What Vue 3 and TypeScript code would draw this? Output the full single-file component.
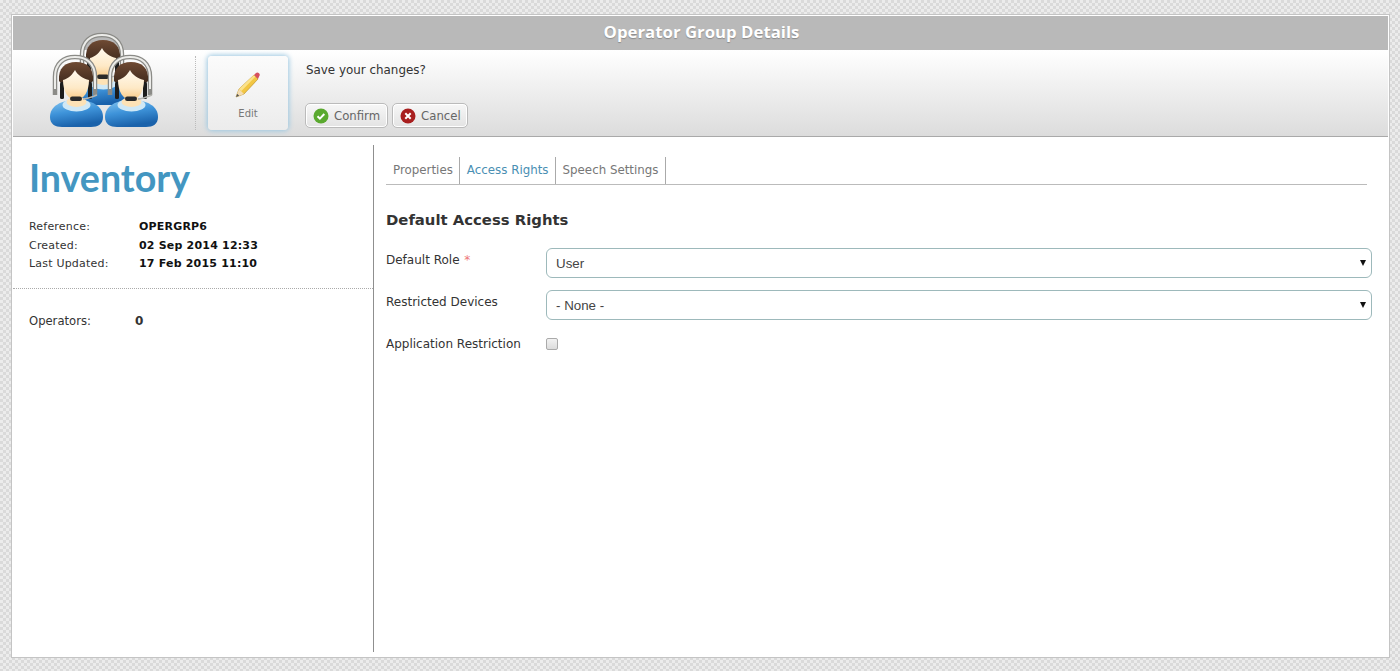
<script setup lang="ts">
const tabs = [
  { label: 'Properties', active: false },
  { label: 'Access Rights', active: true },
  { label: 'Speech Settings', active: false },
]
const info = [
  { label: 'Reference:', value: 'OPERGRP6' },
  { label: 'Created:', value: '02 Sep 2014 12:33' },
  { label: 'Last Updated:', value: '17 Feb 2015 11:10' },
]
</script>

<template>
  <div class="page">
    <div class="panel">
      <svg class="logo" viewBox="0 0 130 102" width="130" height="102" aria-hidden="true">
        <defs>
          <linearGradient id="bodyG" x1="0" y1="0" x2="0.3" y2="1">
            <stop offset="0" stop-color="#86c6f0" />
            <stop offset="0.5" stop-color="#3f94da" />
            <stop offset="1" stop-color="#1a62ab" />
          </linearGradient>
          <linearGradient id="faceG" x1="0" y1="0" x2="0" y2="1">
            <stop offset="0" stop-color="#fffaf0" />
            <stop offset="0.6" stop-color="#fee9c6" />
            <stop offset="1" stop-color="#f9c983" />
          </linearGradient>
          <linearGradient id="hairG" x1="0" y1="0" x2="0" y2="1">
            <stop offset="0" stop-color="#6f4a33" />
            <stop offset="1" stop-color="#3f2a1d" />
          </linearGradient>
          <g id="op">
            <path d="M0 62C0 51 11 45 26.500 45S53 51 53 62c0 7-5 10-12 10H12C5 72 0 69 0 62z" fill="url(#bodyG)" />
            <ellipse cx="26.500" cy="50" rx="14" ry="6.500" fill="#cfe8f6" />
            <ellipse cx="26.500" cy="47" rx="10" ry="5" fill="#fde2b6" />
            <path d="M5 40V22C5 8 14 2 25 2s20 6 20 20v18" fill="none" stroke="#8b8b87" stroke-width="4.500" />
            <path d="M5 34V22C5 8 14 2 25 2s20 6 20 20v12" fill="none" stroke="#ecece9" stroke-width="2" />
            <path d="M9 26C8 13 15 7 26 7s18 6 17 19l-3 3H12z" fill="url(#hairG)" />
            <rect x="10" y="27" width="4" height="17" rx="1.500" fill="#1c1c1c" />
            <rect x="38" y="27" width="4" height="17" rx="1.500" fill="#1c1c1c" />
            <path d="M13 25c5-1 10-6 12-10 2 5 9 9 14 10 0 11-5 20-13 20S13 36 13 25z" fill="url(#faceG)" />
            <path d="M33 44c4 0 9-2 14-4" fill="none" stroke="#b5b5b0" stroke-width="1.800" />
            <rect x="20" y="41.500" width="12" height="4.500" rx="2.200" fill="#2a2a2a" />
          </g>
        </defs>
        <use href="#op" x="37" y="3" />
        <use href="#op" x="10" y="25" />
        <use href="#op" x="65" y="25" />
      </svg>

      <header class="title">Operator Group Details</header>

      <div class="toolbar">
        <div class="sep"></div>
        <button class="edit" type="button">
          <svg viewBox="0 0 28 28" width="28" height="28" aria-hidden="true">
            <path d="M2 26l3-8L20 4l4 4L10 23z" fill="#f2c643" stroke="#b58a22" stroke-width=".6" />
            <path d="M5 18L20 4l1.600 1.600L7.400 20z" fill="#fbe28a" />
            <path d="M2 26l3-8 5 5z" fill="#f3dcb3" />
            <path d="M2 26l1.200-3.200 2 2z" fill="#555" />
            <path d="M20 4l2-2c1-.8 2-.7 3 .2s1 2 .2 3L24 8z" fill="#d6505f" />
          </svg>
          <span>Edit</span>
        </button>
        <div class="prompt">
          <p class="question">Save your changes?</p>
          <div class="actions">
            <button class="action" type="button">
              <svg viewBox="0 0 16 16" width="16" height="16" aria-hidden="true">
                <circle cx="8" cy="8" r="7.500" fill="#5aa92f" />
                <path d="M4.500 8.200l2.400 2.400 4.400-4.600" fill="none" stroke="#fff" stroke-width="2" />
              </svg>
              Confirm
            </button>
            <button class="action" type="button">
              <svg viewBox="0 0 16 16" width="16" height="16" aria-hidden="true">
                <circle cx="8" cy="8" r="7.500" fill="#a81f1f" />
                <path d="M5.300 5.300l5.400 5.400M10.700 5.300l-5.400 5.400" fill="none" stroke="#fff" stroke-width="2" />
              </svg>
              Cancel
            </button>
          </div>
        </div>
      </div>

      <div class="content">
        <aside class="side">
          <div class="side-top">
            <h1>Inventory</h1>
            <dl class="info">
              <div v-for="row in info" :key="row.label" class="info-row">
                <dt>{{ row.label }}</dt>
                <dd>{{ row.value }}</dd>
              </div>
            </dl>
          </div>
          <div class="count">
            <span>Operators:</span>
            <b>0</b>
          </div>
        </aside>

        <main class="main">
          <nav class="tabs">
            <a v-for="tab in tabs" :key="tab.label" class="tab" :class="{ active: tab.active }">{{ tab.label }}</a>
          </nav>
          <h2>Default Access Rights</h2>
          <div class="field">
            <label>Default Role <i>*</i></label>
            <div class="select-wrap">
              <select><option>User</option></select>
            </div>
          </div>
          <div class="field">
            <label>Restricted Devices</label>
            <div class="select-wrap">
              <select><option>- None -</option></select>
            </div>
          </div>
          <div class="field check">
            <label>Application Restriction</label>
            <input type="checkbox" />
          </div>
        </main>
      </div>
    </div>
  </div>
</template>

<style>
html, body { margin: 0; }
</style>

<style scoped>
.page {
  height: 671px;
  box-sizing: border-box;
  padding: 15px 11px 14px 12px;
  display: flex;
  background-color: #e4e4e4;
  background-image: conic-gradient(#dadada 25%, #ececec 0 50%, #dadada 0 75%, #ececec 0);
  background-size: 6px 6px;
  font-family: "DejaVu Sans", sans-serif;
  color: #333;
}
.panel {
  position: relative;
  flex: 1;
  display: flex;
  flex-direction: column;
  background: #fff;
  border: 1px solid #fff;
  outline: 1px solid #c4c4c4;
  min-width: 0;
}
.logo {
  position: absolute;
  left: 27px;
  top: 14px;
}
.title {
  height: 34px;
  background: #b9b9b9;
  color: #fff;
  text-align: center;
  font: 700 16.8px/32px "Open Sans", sans-serif;
  text-shadow: 0 1px 1px #8a8a8a;
  padding-left: 2px;
}
.toolbar {
  height: 87px;
  box-sizing: border-box;
  display: flex;
  padding: 6px 0 0 182px;
  background: linear-gradient(#ffffff, #dcdcdc);
  border-bottom: 1px solid #a9a9a9;
}
.sep {
  width: 0;
  height: 74px;
  border-left: 1px dotted #bbb;
}
.edit {
  margin-left: 12px;
  width: 80px;
  height: 74px;
  padding: 15px 0 0;
  box-sizing: border-box;
  display: flex;
  flex-direction: column;
  align-items: center;
  gap: 9px;
  border: 0;
  border-radius: 4px;
  background: linear-gradient(#fbfbfb, #ececec);
  box-shadow: 0 0 5px 1px #9cc8e2;
  font: 10px "DejaVu Sans", sans-serif;
  color: #777;
}
.prompt {
  margin-left: 16px;
  display: flex;
  flex-direction: column;
}
.question {
  margin: 0;
  padding: 7px 0 0 2px;
  font-size: 11.9px;
  line-height: 15px;
}
.actions {
  margin-top: 25px;
  display: flex;
  gap: 4px;
  margin-left: 1px;
}
.action {
  height: 25px;
  padding: 0 7px;
  box-sizing: border-box;
  display: flex;
  align-items: center;
  gap: 5px;
  border: 1px solid #bbb;
  border-radius: 5px;
  background: linear-gradient(#f7f7f7, #e3e3e3);
  box-shadow: inset 0 0 0 1px #fff;
  font: 11.7px "DejaVu Sans", sans-serif;
  color: #666;
}
.action + .action {
  padding-right: 6px;
}
.content {
  flex: 1;
  display: flex;
  padding: 8px 0 4px;
  min-height: 0;
}
.side {
  width: 361px;
  box-sizing: border-box;
  border-right: 1px solid #8f8f8f;
  flex: none;
}
.side-top {
  height: 144px;
  box-sizing: border-box;
  padding: 8px 0 0 16px;
  border-bottom: 1px dotted #aaa;
}
h1 {
  margin: 0;
  font: 700 37.6px/50px Lato, sans-serif;
  color: #4396c1;
}
.info {
  margin: 15px 0 0;
  font-size: 11px;
  letter-spacing: 0.2px;
}
.info-row {
  display: flex;
  height: 18.5px;
  line-height: 18.5px;
}
dt { width: 110px; color: #333; }
dd { margin: 0; font-weight: 700; color: #111; }
.count {
  padding: 25px 0 0 16px;
  display: flex;
  font-size: 11.6px;
  line-height: 15px;
}
.count span { width: 106px; }
.count b { font-size: 12px; }
.main {
  flex: 1;
  min-width: 0;
  padding: 12px 16px 0 12px;
}
.tabs {
  display: flex;
  height: 28px;
  margin-right: 5px;
  border-bottom: 1px solid #bbb;
  box-sizing: border-box;
}
.tab {
  height: 27px;
  line-height: 27px;
  padding: 0 6px 0 7px;
  border-right: 1px solid #aaa;
  font-size: 11.85px;
  color: #777;
}
.tab.active { color: #4a8fb3; }
h2 {
  margin: 0;
  padding-top: 26px;
  font-size: 14.85px;
  line-height: 18px;
  color: #333;
}
.field {
  display: flex;
  margin-top: 12px;
  height: 30px;
}
h2 + .field { margin-top: 19px; }
.field label {
  width: 160px;
  flex: none;
  font-size: 12px;
  line-height: 24px;
}
.field i { color: #e77; font-style: normal; margin-left: 1px; }
.select-wrap {
  position: relative;
  flex: 1;
}
.select-wrap::after {
  content: "";
  position: absolute;
  right: 6px;
  top: 12px;
  border-left: 3.5px solid transparent;
  border-right: 3.5px solid transparent;
  border-top: 6px solid #111;
  pointer-events: none;
}
select {
  appearance: none;
  width: 100%;
  height: 30px;
  box-sizing: border-box;
  padding: 0 0 0 9px;
  border: 1px solid #9db9bb;
  border-radius: 6px;
  background: #fff;
  font: 13.33px "Liberation Sans", sans-serif;
  color: #444;
}
.check input {
  appearance: none;
  width: 12px;
  height: 12px;
  margin: 6px 0 0;
  border: 1px solid #aaa;
  border-radius: 2px;
  background: linear-gradient(#f2f2f2, #dcdcdc);
}
</style>
